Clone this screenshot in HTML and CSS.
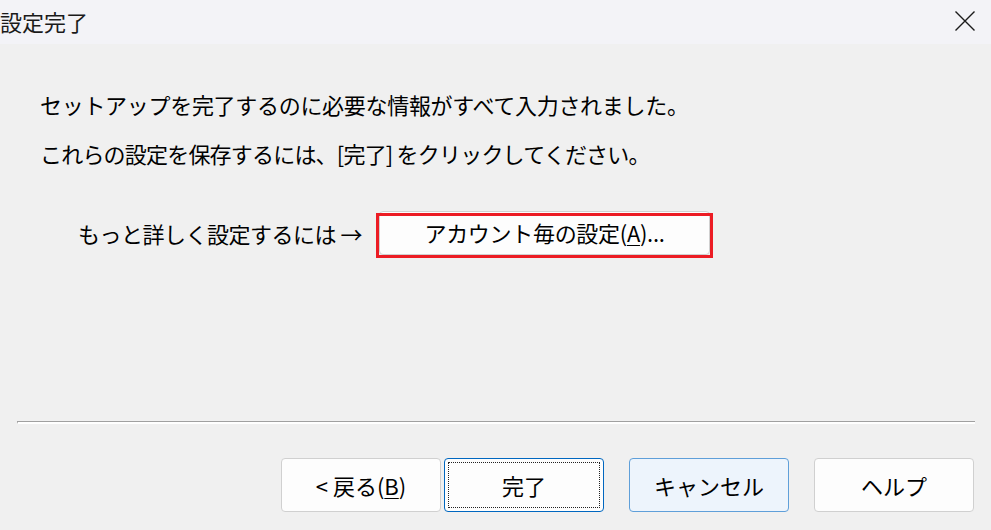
FILE: index.html
```html
<!DOCTYPE html>
<html lang="ja">
<head>
<meta charset="utf-8">
<title>設定完了</title>
<link rel="stylesheet" href="styles.css">
</head>
<body>
<div class="window">
  <div class="titlebar">
    <span class="title">設定完了</span>
    <span class="close">
      <svg width="22" height="22" viewBox="0 0 22 22"><path d="M1.5 1.5 L20.5 20.5 M20.5 1.5 L1.5 20.5" stroke="#1b1b1b" stroke-width="1.4" fill="none"/></svg>
    </span>
  </div>
  <div class="content">
    <p class="line l1">セットアップを完了するのに必要な情報がすべて入力されました。</p>
    <p class="line l2">これらの設定を保存するには、[完了] をクリックしてください。</p>
    <div class="detail-row">
      <span class="detail-label">もっと詳しく設定するには&nbsp;→</span>
      <span class="btn-wrap">
        <span class="btn wide">アカウント毎の設定(<u>A</u>)...</span>
        <span class="highlight"></span>
      </span>
    </div>
    <div class="separator"></div>
    <div class="buttons">
      <span class="btn back">&lt;&nbsp;戻る(<u>B</u>)</span>
      <span class="btn finish"><span class="focus">完了</span></span>
      <span class="btn cancel">キャンセル</span>
      <span class="btn help">ヘルプ</span>
    </div>
  </div>
</div>
</body>
</html>
```

FILE: styles.css
```css
html, body {
  margin: 0;
  padding: 0;
  width: 991px;
  height: 530px;
  overflow: hidden;
  background: #f0f0f0;
  font-family: "Noto Sans CJK JP", "Noto Sans", sans-serif;
  color: #000;
}

.window {
  width: 991px;
  height: 530px;
  display: flex;
  flex-direction: column;
}

.titlebar {
  height: 44px;
  background: #f3f3f7;
  display: flex;
  align-items: center;
  justify-content: space-between;
  flex-shrink: 0;
}

.title {
  font-size: 22px;
  line-height: 30px;
  margin-left: 0;
  margin-top: -2px;
  color: #1a1a1a;
}

.close {
  display: flex;
  margin-right: 15px;
  margin-top: -2px;
}

.content {
  padding-top: 45px;
  display: flex;
  flex-direction: column;
}

.line {
  margin: 0;
  padding-left: 40px;
  font-size: 22px;
  line-height: 30px;
  white-space: nowrap;
}

.l1 { letter-spacing: -0.3px; }

.l2 {
  margin-top: 19px;
  letter-spacing: -0.8px;
}

.detail-row {
  margin-top: 43px;
  padding-left: 78px;
  display: flex;
  align-items: center;
  height: 44px;
}

.detail-label {
  font-size: 22px;
  line-height: 30px;
  white-space: nowrap;
  width: 301px;
  letter-spacing: -0.5px;
}

.btn-wrap {
  position: relative;
  display: flex;
}

.btn {
  box-sizing: border-box;
  display: flex;
  align-items: center;
  justify-content: center;
  background: #fdfdfd;
  border: 1px solid #d0d0d0;
  border-radius: 4px;
  font-size: 22px;
  white-space: nowrap;
}

.btn u {
  text-decoration-thickness: 1px;
  text-underline-offset: 3px;
}

.wide {
  width: 331px;
  height: 44px;
  padding-bottom: 2px;
  letter-spacing: -0.3px;
}

.highlight {
  position: absolute;
  left: -3px;
  top: 2px;
  width: 337px;
  height: 45px;
  box-sizing: border-box;
  border: 3px solid #ec1c24;
}

.separator {
  margin-top: 166px;
  margin-left: 17px;
  width: 958px;
  border-top: 1px solid #a0a0a0;
  border-bottom: 2px solid #ffffff;
  border-left: 1px solid #a0a0a0;
  box-sizing: border-box;
  height: 3px;
}

.buttons {
  margin-top: 34px;
  display: flex;
  padding-left: 281px;
}

.buttons .btn {
  width: 160px;
  height: 54px;
}

.finish {
  margin-left: 3px;
  border: 1.5px solid #0067c0;
  padding: 3px;
}

.focus {
  flex: 1;
  align-self: stretch;
  display: flex;
  align-items: center;
  justify-content: center;
  border: 1px dotted #222;
}

.cancel {
  margin-left: 25px;
  background: #edf4fc !important;
  border-color: #5f9fd9 !important;
}

.help {
  margin-left: 25px;
}
```
